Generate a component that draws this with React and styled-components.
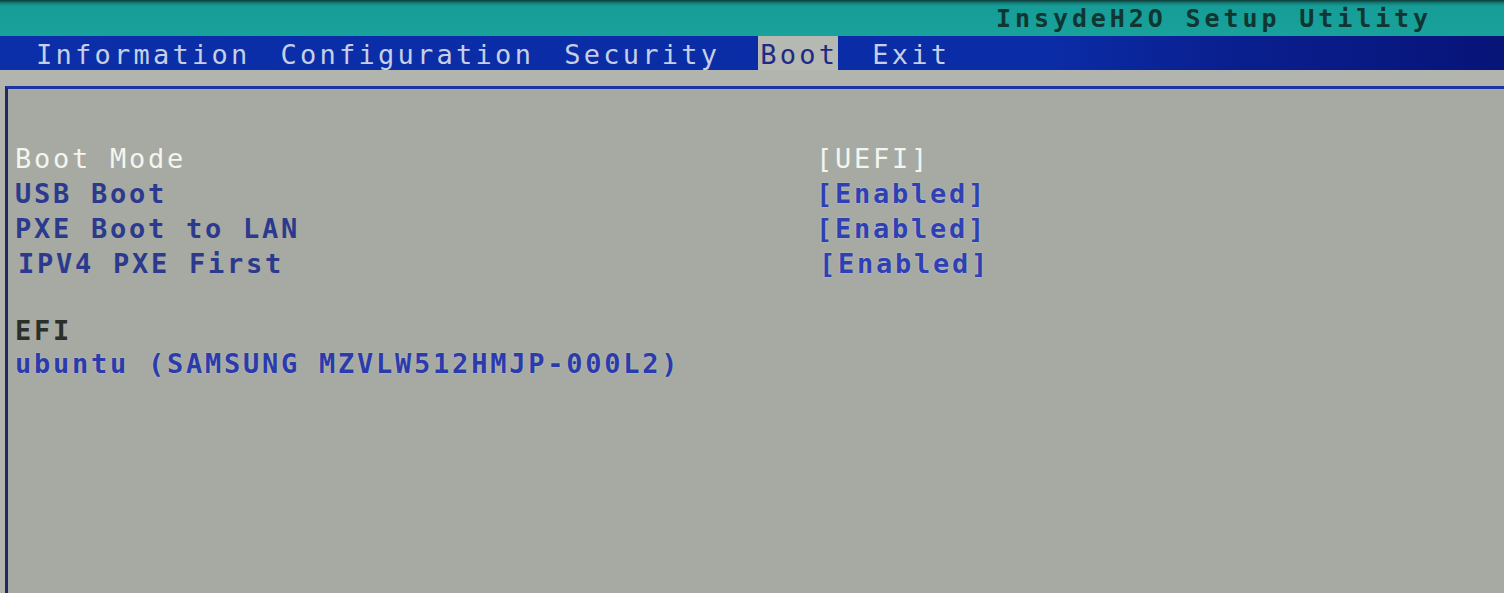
import styled, { createGlobalStyle } from "styled-components";

const GlobalStyle = createGlobalStyle`
  html, body {
    margin: 0;
    padding: 0;
    background: #a6aaa2;
  }
  #root {
    min-height: 100vh;
  }
`;

const mono = `"DejaVu Sans Mono", "Liberation Mono", monospace`;

const Screen = styled.div`
  display: flex;
  flex-direction: column;
  min-height: 100vh;
  background: #b2b5ad;
  font-family: ${mono};
`;

const TitleBar = styled.header`
  height: 36px;
  box-sizing: border-box;
  display: flex;
  justify-content: flex-end;
  align-items: flex-end;
  padding-right: 72px;
  background: linear-gradient(#0c3b37 0, #127d78 3px, #179d97 6px, #19a19b 100%);
`;

const Title = styled.h1`
  margin: 0 0 2px;
  font-size: 25px;
  line-height: 30px;
  font-weight: bold;
  letter-spacing: 3.9px;
  color: #0f3631;
`;

const MenuBar = styled.nav`
  height: 34px;
  display: flex;
  align-items: stretch;
  padding-left: 36px;
  gap: 30px;
  background: linear-gradient(90deg, #0b2fa8 0%, #0a2ca6 70%, #0a1f8f 82%, #071478 100%);
`;

const Tab = styled.span`
  display: flex;
  align-items: center;
  padding-top: 3px;
  font-size: 27px;
  letter-spacing: 3.25px;
  color: ${(p) => (p.$active ? "#1d2a86" : "#c6cfe6")};
  background: ${(p) => (p.$active ? "#b6b9b1" : "transparent")};
  padding-left: ${(p) => (p.$active ? "2px" : "0")};
  margin-left: ${(p) => (p.$active ? "8px" : "0")};
  margin-right: ${(p) => (p.$active ? "4px" : "0")};
`;

const Strip = styled.div`
  height: 16px;
  background: #b2b5ad;
`;

const Panel = styled.main`
  flex: 1;
  margin-left: 5px;
  border-top: 3px solid #1d35a2;
  border-left: 3px solid #23285e;
  background: #a6aaa2;
  padding: 52px 0 0 7px;
`;

const Row = styled.div`
  display: grid;
  grid-template-columns: 801px auto;
  height: 35px;
  line-height: 35px;
  font-size: 27px;
  letter-spacing: 2.75px;
`;

const Label = styled.span`
  padding-left: ${(p) => p.$indent || 0}px;
  color: ${(p) => (p.$selected ? "#f3f5ef" : "#2c3a8e")};
  font-weight: ${(p) => (p.$selected ? "normal" : "bold")};
`;

const Value = styled.span`
  padding-left: ${(p) => p.$indent || 0}px;
  color: ${(p) => (p.$selected ? "#f3f5ef" : "#2f40b4")};
  font-weight: ${(p) => (p.$selected ? "normal" : "bold")};
  text-shadow: ${(p) => (p.$selected ? "none" : "0 0 2px rgba(220, 228, 240, 0.55)")};
`;

const Spacer = styled.div`
  height: 32px;
`;

const GroupTitle = styled.div`
  height: 33px;
  line-height: 35px;
  font-size: 27px;
  letter-spacing: 2.75px;
  font-weight: bold;
  color: #2a2f2a;
`;

const BootEntry = styled(GroupTitle)`
  height: 35px;
  color: #2b3bab;
  text-shadow: 0 0 2px rgba(220, 228, 240, 0.45);
`;

const tabs = ["Information", "Configuration", "Security", "Boot", "Exit"];

const settings = [
  { label: "Boot Mode", value: "[UEFI]", selected: true },
  { label: "USB Boot", value: "[Enabled]" },
  { label: "PXE Boot to LAN", value: "[Enabled]" },
  { label: "IPV4 PXE First", value: "[Enabled]", indent: 3 },
];

export default function App() {
  return (
    <>
      <GlobalStyle />
      <Screen>
        <TitleBar>
          <Title>InsydeH2O Setup Utility</Title>
        </TitleBar>
        <MenuBar>
          {tabs.map((t) => (
            <Tab key={t} $active={t === "Boot"}>
              {t}
            </Tab>
          ))}
        </MenuBar>
        <Strip />
        <Panel>
          {settings.map((s) => (
            <Row key={s.label}>
              <Label $selected={s.selected} $indent={s.indent}>
                {s.label}
              </Label>
              <Value $selected={s.selected} $indent={s.indent}>
                {s.value}
              </Value>
            </Row>
          ))}
          <Spacer />
          <GroupTitle>EFI</GroupTitle>
          <BootEntry>ubuntu (SAMSUNG MZVLW512HMJP-000L2)</BootEntry>
        </Panel>
      </Screen>
    </>
  );
}
